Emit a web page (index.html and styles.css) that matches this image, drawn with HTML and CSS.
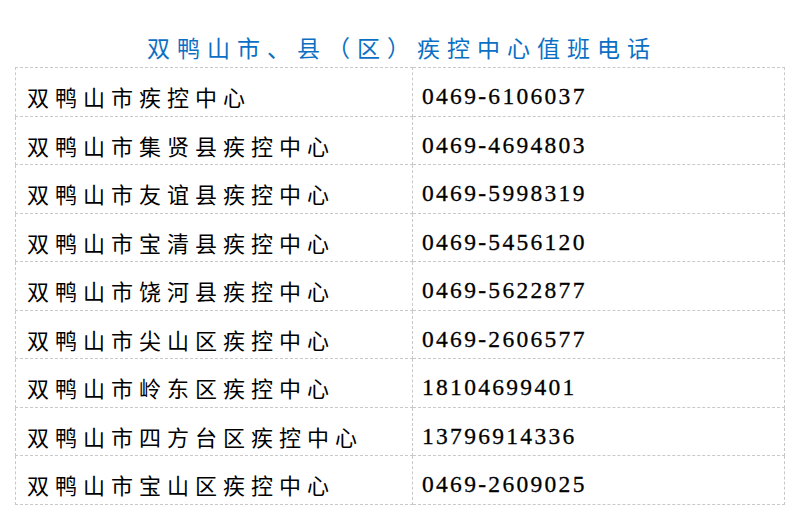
FILE: index.html
```html
<!DOCTYPE html>
<html lang="zh-CN">
<head>
<meta charset="utf-8">
<title>双鸭山市、县（区）疾控中心值班电话</title>
<link rel="stylesheet" href="styles.css">
</head>
<body>
<div class="page">
  <h1 class="title">双鸭山市、县（区）疾控中心值班电话</h1>
  <table class="phones">
    <tbody>
      <tr><td class="name">双鸭山市疾控中心</td><td class="tel">0469-6106037</td></tr>
      <tr><td class="name">双鸭山市集贤县疾控中心</td><td class="tel">0469-4694803</td></tr>
      <tr><td class="name">双鸭山市友谊县疾控中心</td><td class="tel">0469-5998319</td></tr>
      <tr><td class="name">双鸭山市宝清县疾控中心</td><td class="tel">0469-5456120</td></tr>
      <tr><td class="name">双鸭山市饶河县疾控中心</td><td class="tel">0469-5622877</td></tr>
      <tr><td class="name">双鸭山市尖山区疾控中心</td><td class="tel">0469-2606577</td></tr>
      <tr><td class="name">双鸭山市岭东区疾控中心</td><td class="tel">18104699401</td></tr>
      <tr><td class="name">双鸭山市四方台区疾控中心</td><td class="tel">13796914336</td></tr>
      <tr><td class="name">双鸭山市宝山区疾控中心</td><td class="tel">0469-2609025</td></tr>
    </tbody>
  </table>
</div>
</body>
</html>
```

FILE: styles.css
```css
html, body {
  margin: 0;
  padding: 0;
  background: #ffffff;
}

.page {
  width: 796px;
  height: 519px;
  padding: 32px 11px 0 15px;
  box-sizing: border-box;
}

.title {
  margin: 0 0 5px 0;
  height: 30px;
  line-height: 30px;
  text-align: center;
  font-family: "Noto Sans CJK SC", sans-serif;
  font-weight: normal;
  font-size: 23px;
  letter-spacing: 7px;
  color: #0b6fc4;
  padding-left: 4px;
}

.phones {
  width: 770px;
  border-collapse: collapse;
  table-layout: fixed;
}

.phones tr {
  height: 48.5px;
}

.phones td {
  border: 1px dashed #c9c9c9;
  padding: 9px 9px 0 11px;
  vertical-align: middle;
  color: #000000;
  white-space: nowrap;
}

.phones td.name {
  width: 397px;
  box-sizing: border-box;
  font-family: "Noto Sans CJK SC", serif;
  font-size: 22px;
  line-height: 28px;
  letter-spacing: 6px;
}

.phones td.tel {
  padding-left: 9px;
  font-family: "Liberation Serif", serif;
  font-size: 23.5px;
  line-height: 28px;
  letter-spacing: 2.3px;
  -webkit-text-stroke: 0.3px #000;
}
```
